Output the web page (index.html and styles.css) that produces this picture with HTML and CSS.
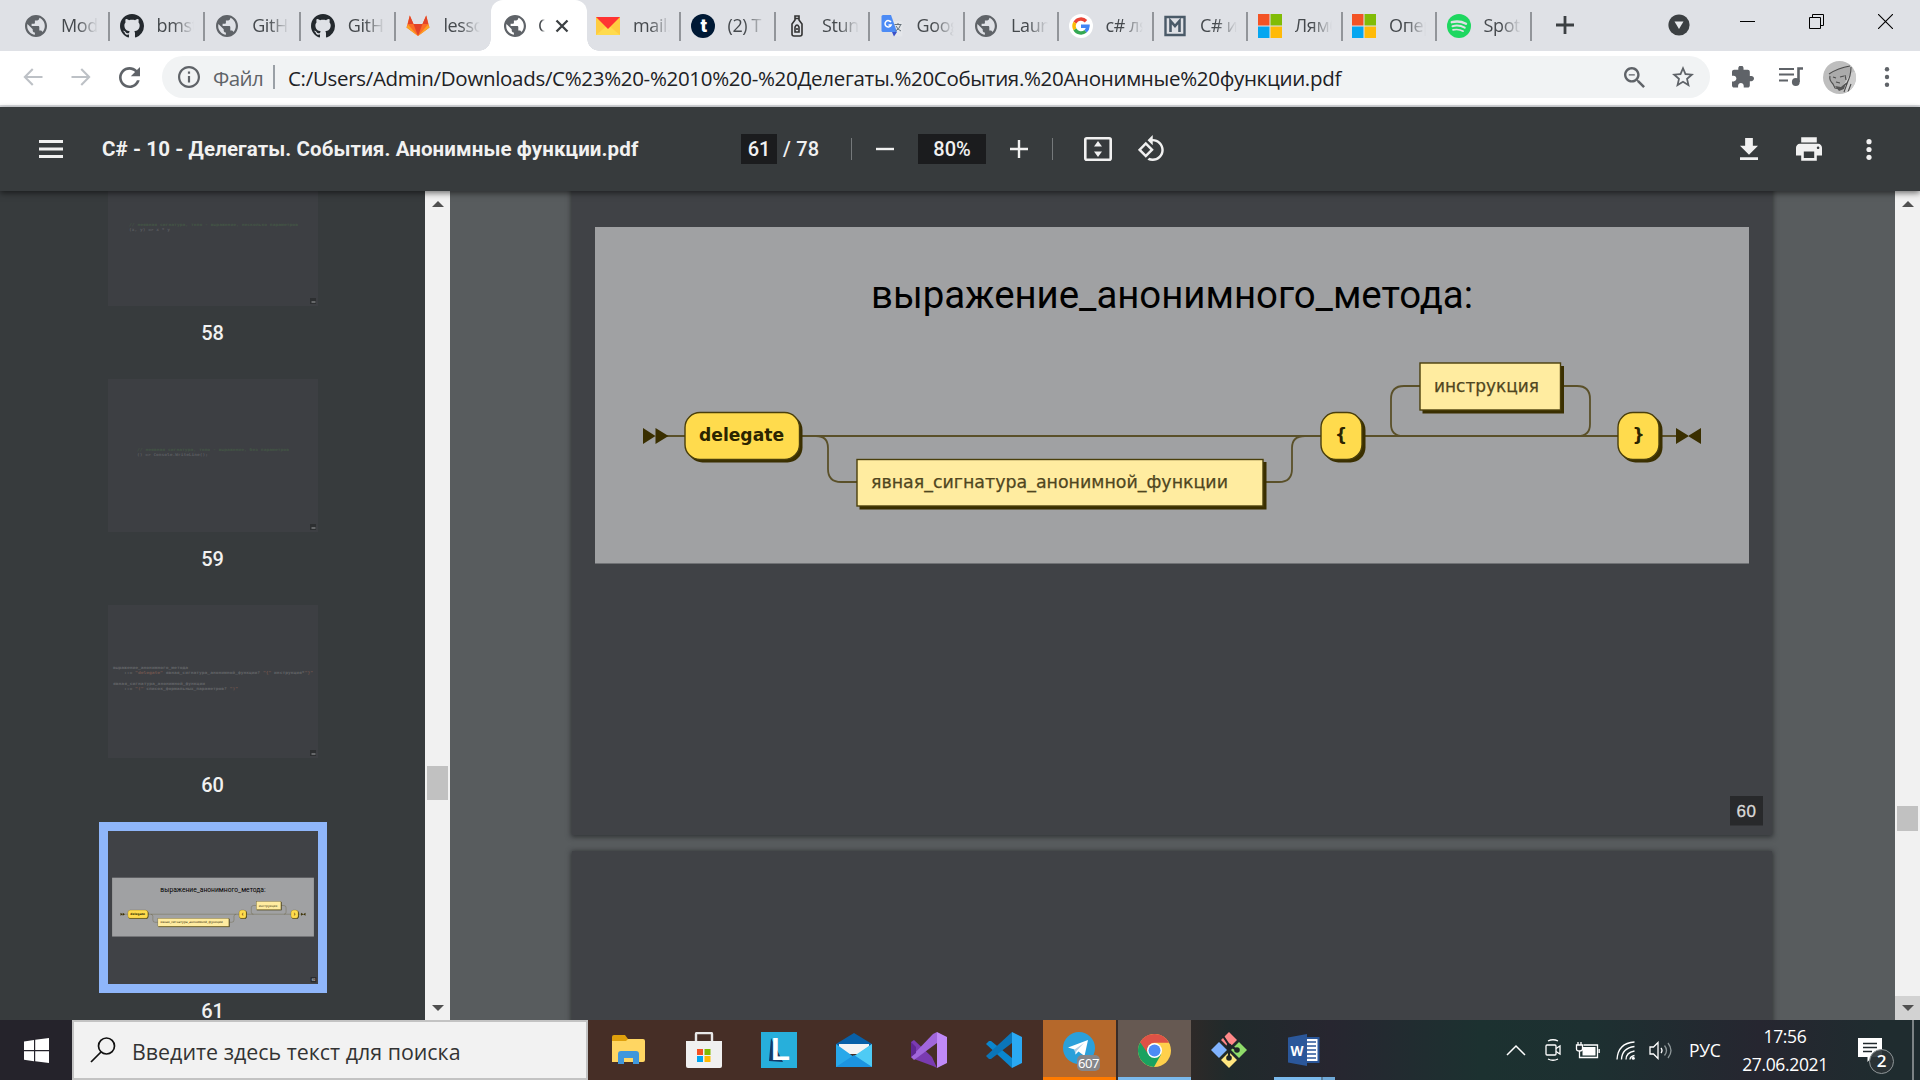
FILE: index.html
```html
<!DOCTYPE html>
<html lang="ru">
<head>
<meta charset="utf-8">
<title>C# - 10 - Делегаты. События. Анонимные функции.pdf</title>
<link rel="stylesheet" href="styles.css">
</head>
<body>
<svg class="defs" width="0" height="0">
  <defs>
    <symbol id="globe" viewBox="2 2 20 20"><path d="M12 2C6.48 2 2 6.48 2 12s4.480 10 10 10 10-4.480 10-10S17.520 2 12 2zm-1 17.930c-3.950-.49-7-3.850-7-7.930 0-.62.08-1.210.21-1.790L9 15v1c0 1.100.9 2 2 2v1.930zm6.900-2.540c-.26-.81-1-1.390-1.900-1.390h-1v-3c0-.55-.45-1-1-1H8v-2h2c.55 0 1-.45 1-1V7h2c1.100 0 2-.9 2-2v-.41c2.930 1.190 5 4.060 5 7.410 0 2.080-.8 3.970-2.100 5.390z" fill="#5f6368"/></symbol>
    <symbol id="github" viewBox="0 0 16 16"><path d="M8 0C3.58 0 0 3.58 0 8c0 3.54 2.29 6.53 5.47 7.59.4.07.55-.17.55-.38 0-.19-.01-.82-.01-1.49-2.01.37-2.53-.49-2.69-.94-.09-.23-.48-.94-.82-1.13-.28-.15-.68-.52-.01-.53.63-.01 1.08.58 1.23.82.72 1.21 1.87.87 2.33.66.07-.52.28-.87.51-1.07-1.78-.2-3.64-.89-3.64-3.95 0-.87.31-1.59.82-2.15-.08-.2-.36-1.02.08-2.12 0 0 .67-.21 2.2.82.64-.18 1.32-.27 2-.27.68 0 1.36.09 2 .27 1.53-1.04 2.2-.82 2.2-.82.44 1.1.16 1.92.08 2.12.51.56.82 1.27.82 2.15 0 3.07-1.87 3.75-3.65 3.95.29.25.54.73.54 1.48 0 1.07-.01 1.93-.01 2.2 0 .21.15.46.55.38A8.013 8.013 0 0016 8c0-4.42-3.58-8-8-8z" fill="#24292e"/></symbol>
    <symbol id="microsoft" viewBox="0 0 23 23"><path fill="#f35325" d="M0 0h11v11H0z"/><path fill="#81bc06" d="M12 0h11v11H12z"/><path fill="#05a6f0" d="M0 12h11v11H0z"/><path fill="#ffba08" d="M12 12h11v11H12z"/></symbol>
    <symbol id="slide" viewBox="572 -40 1200 875">
      <rect x="572" y="-40" width="1200" height="875" fill="#404246"/>
      <rect x="595" y="227" width="1154" height="336.500" fill="#a0a1a3"/>
      <text x="871" y="308" font-family="Roboto, sans-serif" font-size="38.400" textLength="602" fill="#000">выражение_анонимного_метода:</text>
      <g fill="none" stroke="#5a5029" stroke-width="1.800">
        <path d="M660 436H1680M816 436q12 0 12 12v21q0 13 13 13H857M1266 482H1279q13 0 13-13V448q0-12 13-12M1403 436q-12 0-12-12V399q0-13 13-13H1420M1563 386h14q13 0 13 13v25q0 12-12 12"/>
      </g>
      <g fill="#3a2f00">
        <path d="M643 428l12.500 8-12.500 8zM655.500 428l13 8-13 8zM1676 428l13 8-13 8zM1701 428l-13 8 13 8z"/>
        <rect x="687.500" y="415" width="115" height="47.500" rx="15"/>
        <rect x="859.500" y="462" width="407" height="47.500"/>
        <rect x="1323.500" y="415" width="42" height="47.500" rx="15"/>
        <rect x="1422.500" y="366" width="141.500" height="47.500"/>
        <rect x="1620.500" y="415" width="42" height="47.500" rx="15"/>
      </g>
      <g fill="#ffdb4d" stroke="#4a3f0b" stroke-width="1.400">
        <rect x="685" y="412.500" width="114.500" height="47" rx="15"/>
        <rect x="1321" y="412.500" width="41" height="47" rx="15"/>
        <rect x="1618" y="412.500" width="41" height="47" rx="15"/>
      </g>
      <g fill="#ffeca0" stroke="#4a3f0b" stroke-width="1.400">
        <rect x="857" y="459.500" width="406" height="46.500"/>
        <rect x="1420" y="363" width="140.500" height="47"/>
      </g>
      <g font-family="'DejaVu Sans', sans-serif" font-size="17" font-weight="700" fill="#2b2400">
        <text x="699" y="441" textLength="85" lengthAdjust="spacingAndGlyphs">delegate</text>
        <text x="1341" y="441" text-anchor="middle">{</text>
        <text x="1638.500" y="441" text-anchor="middle">}</text>
      </g>
      <g font-family="'DejaVu Sans', sans-serif" font-size="17" fill="#4f4620" stroke="#4f4620" stroke-width=".25">
        <text x="871" y="488" textLength="357" lengthAdjust="spacingAndGlyphs">явная_сигнатура_анонимной_функции</text>
        <text x="1434" y="392" textLength="105" lengthAdjust="spacingAndGlyphs">инструкция</text>
      </g>
      <rect x="1730" y="796" width="33" height="29.500" fill="#28292b"/>
      <text x="1736.500" y="816.500" font-family="'Liberation Sans', sans-serif" font-size="17" fill="#d8d8d8" stroke="#d8d8d8" stroke-width=".3" textLength="19.500">60</text>
    </symbol>
  </defs>
</svg>

<header class="tabs">
  <div class="tab"><svg class="fav"><use href="#globe"/></svg><span>Mod</span></div>
  <div class="tab"><svg class="fav big"><use href="#github"/></svg><span>bmst</span></div>
  <div class="tab"><svg class="fav"><use href="#globe"/></svg><span>GitH</span></div>
  <div class="tab"><svg class="fav big"><use href="#github"/></svg><span>GitH</span></div>
  <div class="tab last"><svg class="fav big" viewBox="0 0 24 24"><path d="M12 22L.5 13.500 3.800 1.500 7.500 10h9L20.200 1.500 23.500 13.500z" fill="#fc6d26"/><path d="M12 22L7.500 10h9z" fill="#e24329"/><path d="M.5 13.500L12 22 2 10.500zM23.500 13.500L12 22 22 10.500z" fill="#fca326"/><path d="M3.800 1.500L7.500 10H1.800zM20.200 1.500L16.500 10h5.700z" fill="#e24329"/></svg><span>lesso</span></div>
  <div class="tab active"><svg class="fav"><use href="#globe"/></svg><span>C</span><svg class="close" viewBox="0 0 14 14"><path d="M1.500 1.500l11 11M12.500 1.500l-11 11" stroke="#3c4043" stroke-width="2.300"/></svg></div>
  <div class="tab narrow"><svg class="fav big" viewBox="0 0 24 24"><path d="M0 3h24v18H0z" fill="#ffcc40"/><path d="M0 21L12 11 24 21z" fill="#ffdb4d"/><path d="M0 3h24L12 15z" fill="#f33"/></svg><span>mail.</span></div>
  <div class="tab narrow"><svg class="fav big" viewBox="0 0 24 24"><circle cx="12" cy="12" r="12" fill="#001935"/><text x="12.500" y="18" text-anchor="middle" font-family="Roboto, sans-serif" font-size="19" font-weight="900" fill="#fff">t</text></svg><span>(2) T</span></div>
  <div class="tab narrow"><svg class="fav big" viewBox="0 0 24 24"><path d="M10 2h4v4l3 4v10q0 2-2 2H9q-2 0-2-2V10l3-4zM9.500 4.500h5" fill="none" stroke="#333" stroke-width="1.600"/><path d="M10 18v-5q2-4 4 0v5zM12 14v2" fill="none" stroke="#333" stroke-width="1.600"/></svg><span>Stun</span></div>
  <div class="tab narrow"><svg class="fav big" viewBox="0 0 24 24"><path d="M10 7h11q1.500 0 1.500 1.500V21q0 1.500-1.500 1.500h-7z" fill="#e4e6ea"/><path d="M12 18h5l-3 4.500z" fill="#3a50c8"/><path d="M3 1h8l6 17H3q-1.500 0-1.500-1.500v-14Q1.500 1 3 1z" fill="#4c8bf5"/><path d="M11 8.200A3.200 3.200 0 1 0 11.200 11H8.500" fill="none" stroke="#fff" stroke-width="1.500"/><path d="M14.500 10.500h7M18 9v2M20.500 11q-1 4-5 6M16 12q2 4 5 5" fill="none" stroke="#657079"/></svg><span>Goog</span></div>
  <div class="tab narrow"><svg class="fav"><use href="#globe"/></svg><span>Laun</span></div>
  <div class="tab narrow"><svg class="fav big" viewBox="0 0 24 24"><circle cx="12" cy="12" r="12" fill="#fff"/><g fill="none" stroke-width="3.400"><path d="M17 7.200A7 7 0 0 0 5.900 8.600" stroke="#ea4335"/><path d="M5.900 8.600a7 7 0 0 0 0 6.800" stroke="#fbbc05"/><path d="M5.900 15.400A7 7 0 0 0 16.600 17.300" stroke="#34a853"/><path d="M16.600 17.300A7 7 0 0 0 19 12.300H12" stroke="#4285f4"/></g></svg><span>c# ля</span></div>
  <div class="tab narrow"><svg class="fav big" viewBox="0 0 24 24"><path d="M2.500 3h19v18h-19z" fill="none" stroke="#4a5a68" stroke-width="2.400"/><path d="M7.500 18V7l4.500 5 4.500-5v11" fill="none" stroke="#4a5a68" stroke-width="2.600"/></svg><span>C# и</span></div>
  <div class="tab narrow"><svg class="fav big"><use href="#microsoft"/></svg><span>Лямб</span></div>
  <div class="tab narrow"><svg class="fav big"><use href="#microsoft"/></svg><span>Опер</span></div>
  <div class="tab narrow"><svg class="fav big" viewBox="0 0 24 24"><circle cx="12" cy="12" r="12" fill="#1ed760"/><g fill="none" stroke="#dfe1e6" stroke-linecap="round"><path d="M4.800 8.200q7.500-2 14.200 1.600" stroke-width="2.400"/><path d="M5.500 12.200q6.500-1.700 12.200 1.500" stroke-width="2"/><path d="M6 15.900q5.500-1.300 10.200 1.300" stroke-width="1.600"/></g></svg><span>Spoti</span></div>
  <svg class="newtab" viewBox="0 0 18 18"><path d="M9 0v18M0 9h18" stroke="#3c4043" stroke-width="2.800"/></svg>
  <div class="window-controls">
    <svg width="22" height="22" viewBox="0 0 22 22"><circle cx="11" cy="11" r="10.600" fill="#3c4043"/><path d="M6.500 7.500h9L11 15z" fill="#e8eaed"/></svg>
    <svg width="15" height="15" viewBox="0 0 15 15"><path d="M0 7.500h15" stroke="#000"/></svg>
    <svg width="15" height="15" viewBox="0 0 15 15"><path d="M.5 3.500h11v11H.5zM3.500 3.500v-3h11v11h-3" fill="none" stroke="#000"/></svg>
    <svg width="15" height="15" viewBox="0 0 15 15"><path d="M0 0l15 15M15 0L0 15" stroke="#000" stroke-width="1.100"/></svg>
  </div>
</header>

<nav class="address-bar">
  <svg class="nav-icon" viewBox="0 0 24 24" fill="#bdc1c6"><path d="M21.500 11H6.300l6.200-6.200L11 3.300 2.400 12l8.600 8.700 1.500-1.500L6.300 13h15.200z"/></svg>
  <svg class="nav-icon" viewBox="0 0 24 24" fill="#bdc1c6"><path d="M2.500 11h15.200l-6.200-6.200L13 3.300l8.600 8.700-8.600 8.700-1.500-1.500 6.200-6.200H2.500z"/></svg>
  <svg class="nav-icon reload" viewBox="4 4 16 16" fill="#5f6368"><path d="M17.650 6.350C16.200 4.900 14.210 4 12 4c-4.420 0-7.990 3.580-7.990 8s3.570 8 7.990 8c3.730 0 6.840-2.550 7.730-6h-2.080c-.82 2.330-3.040 4-5.650 4-3.310 0-6-2.690-6-6s2.690-6 6-6c1.660 0 3.140.69 4.220 1.780L13 11h7V4l-2.350 2.350z"/></svg>
  <div class="omnibox">
    <svg width="22" height="22" viewBox="2 2 20 20" fill="#5f6368"><path d="M11 17h2v-6h-2v6zm1-15C6.480 2 2 6.480 2 12s4.480 10 10 10 10-4.480 10-10S17.520 2 12 2zm0 18c-4.410 0-8-3.590-8-8s3.590-8 8-8 8 3.590 8 8-3.590 8-8 8zM11 9h2V7h-2v2z"/></svg>
    <span class="scheme">Файл</span>
    <i class="divider"></i>
    <span class="url">C:/Users/Admin/Downloads/C%23%20-%2010%20-%20Делегаты.%20События.%20Анонимные%20функции.pdf</span>
    <svg class="zoomed" width="21" height="21" viewBox="3 3 17.500 17.500" fill="#5f6368"><path d="M15.500 14h-.79l-.28-.27C15.410 12.590 16 11.110 16 9.500 16 5.910 13.090 3 9.500 3S3 5.910 3 9.500 5.910 16 9.500 16c1.610 0 3.090-.59 4.230-1.570l.27.28v.79l5 4.990L20.490 19l-4.990-5zm-6 0C7.010 14 5 11.990 5 9.500S7.010 5 9.500 5 14 7.010 14 9.500 11.990 14 9.500 14zM7 9h5v1H7z"/></svg>
    <svg width="22" height="22" viewBox="2 2 20 20" fill="#5f6368"><path d="M22 9.240l-7.190-.62L12 2 9.190 8.630 2 9.240l5.460 4.730L5.820 21 12 17.270 18.180 21l-1.630-7.030L22 9.240zM12 15.400l-3.760 2.270 1-4.280-3.320-2.880 4.380-.38L12 6.100l1.710 4.040 4.380.38-3.320 2.880 1 4.280L12 15.400z"/></svg>
  </div>
  <svg class="puzzle" width="22" height="22" viewBox="2 1.500 21 21" fill="#5f6368"><path d="M20.500 11H19V7c0-1.100-.9-2-2-2h-4V3.500C13 2.120 11.880 1 10.500 1S8 2.120 8 3.500V5H4c-1.100 0-1.990.9-1.990 2v3.800H3.500c1.490 0 2.700 1.210 2.700 2.700s-1.210 2.700-2.700 2.700H2V20c0 1.100.9 2 2 2h3.800v-1.500c0-1.490 1.210-2.700 2.700-2.700 1.490 0 2.700 1.210 2.700 2.700V22H17c1.100 0 2-.9 2-2v-4h1.500c1.380 0 2.500-1.120 2.500-2.500S21.880 11 20.500 11z"/></svg>
  <svg class="music" width="25" height="20" viewBox="0 0 25 20"><path d="M0 2h15M0 7.500h15M0 13.500h9" stroke="#5f6368" stroke-width="2.200"/><path d="M24 1.500h-4.500V15" stroke="#5f6368" stroke-width="2.600" fill="none"/><circle cx="16.800" cy="15" r="3.900" fill="#5f6368"/></svg>
  <svg class="avatar" viewBox="0 0 33 33"><defs><clipPath id="av"><circle cx="16.500" cy="16.500" r="16.500"/></clipPath></defs><g clip-path="url(#av)"><path d="M0 0h33v33H0z" fill="#bebebe"/><path d="M6 14q8-7 20-9 4 6 0 13l-4 6-8 3-5-4-3-4z" fill="#ababab"/><path d="M24 18l-5 9 6 6h8V10l-5 2z" fill="#cecece"/><path d="M6 13q9-6 21-8M7 15q-1 4 3 8l2 4 5 1 7-6q4-7 4-16M10 16l3 1M17 16l4-1M13 21l4 1M25 20l-4 11M28 23l-3 8M22 14l1 5" fill="none" stroke="#4c4c4c" stroke-width="1.100"/><path d="M12 25l6 1 5-4-2 6-5 2z" fill="#555"/></g></svg>
  <svg class="more" width="6" height="20" viewBox="0 0 6 20" fill="#5f6368"><circle cx="3" cy="2.200" r="2.200"/><circle cx="3" cy="10" r="2.200"/><circle cx="3" cy="17.800" r="2.200"/></svg>
</nav>

<div class="pdf-toolbar">
  <div class="tool-left">
    <svg width="24" height="18" viewBox="0 0 24 18"><path d="M0 1.500h24M0 9h24M0 16.500h24" stroke="#f1f1f1" stroke-width="3"/></svg>
    <span class="doc-title">C# - 10 - Делегаты. События. Анонимные функции.pdf</span>
  </div>
  <div class="tool-center">
    <span class="field page">61</span><span class="total">/ 78</span>
    <i class="sep"></i>
    <svg class="minus" width="18" height="18" viewBox="0 0 18 18"><path d="M0 9h18" stroke="#f1f1f1" stroke-width="2.400"/></svg>
    <span class="field zoom">80%</span>
    <svg class="plus" width="18" height="18" viewBox="0 0 18 18"><path d="M0 9h18M9 0v18" stroke="#f1f1f1" stroke-width="2.400"/></svg>
    <i class="sep"></i>
    <svg class="fit" width="28" height="24" viewBox="0 0 28 24"><rect x="1.300" y="1.300" width="25.400" height="21.400" rx="1.500" fill="none" stroke="#f1f1f1" stroke-width="2.600"/><path d="M14 4l4 5.500h-8zM14 20l4-5.500h-8z" fill="#f1f1f1"/></svg>
    <svg class="rotate" width="27" height="27" viewBox="1 0 22 22" fill="#f1f1f1"><path d="M7.340 6.410L.86 12.900l6.490 6.480 6.490-6.480-6.500-6.490zM3.690 12.900l3.660-3.660L11 12.900l-3.660 3.660-3.650-3.660zm15.670-6.260C17.610 4.880 15.300 4 13 4V.76L8.760 5 13 9.240V6c1.790 0 3.580.68 4.950 2.050 2.730 2.730 2.730 7.170 0 9.900C16.580 19.320 14.790 20 13 20c-.97 0-1.940-.21-2.840-.61l-1.490 1.490C10.020 21.620 11.510 22 13 22c2.300 0 4.610-.88 6.360-2.640 3.520-3.510 3.520-9.210 0-12.720z"/></svg>
  </div>
  <div class="tool-right">
    <svg width="18" height="22" viewBox="5 3 14 17" fill="#f1f1f1"><path d="M19 9h-4V3H9v6H5l7 7 7-7zM5 18v2h14v-2H5z"/></svg>
    <svg width="26" height="24" viewBox="2 3 20 18" fill="#f1f1f1"><path d="M19 8H5c-1.660 0-3 1.340-3 3v6h4v4h12v-4h4v-6c0-1.660-1.340-3-3-3zm-3 11H8v-5h8v5zm3-7c-.55 0-1-.45-1-1s.45-1 1-1 1 .45 1 1-.45 1-1 1zm-1-9H6v4h12V3z"/></svg>
    <svg width="6" height="21" viewBox="0 0 6 21" fill="#f1f1f1"><circle cx="3" cy="2.700" r="2.600"/><circle cx="3" cy="10.500" r="2.600"/><circle cx="3" cy="18.300" r="2.600"/></svg>
  </div>
</div>

<main class="viewer">
  <aside class="thumbs">
    <figure>
      <svg class="thumb" viewBox="0 0 210 153"><g font-family="'DejaVu Sans Mono', monospace" font-size="4" font-weight="700"><text x="21" y="72.500" textLength="169" lengthAdjust="spacingAndGlyphs" fill="#435545">//  неявная сигнатура, тело - выражение, несколько параметров</text><text x="21" y="77.500" textLength="41" lengthAdjust="spacingAndGlyphs" fill="#5a5c60">(x, y) =&gt; x * y</text></g><path d="M202 145h6v6h-6z" fill="#2d2f31"/><path d="M203.500 148h4v2h-4z" fill="#66686a"/></svg>
      <figcaption>58</figcaption>
    </figure>
    <figure>
      <svg class="thumb" viewBox="0 0 210 153"><g font-family="'DejaVu Sans Mono', monospace" font-size="4" font-weight="700"><text x="29" y="71.500" textLength="152" lengthAdjust="spacingAndGlyphs" fill="#435545">//  неявная сигнатура, тело - выражение, без параметров</text><text x="29" y="76.500" textLength="71" lengthAdjust="spacingAndGlyphs" fill="#5a5c60">() =&gt; Console.WriteLine();</text></g><path d="M202 145h6v6h-6z" fill="#2d2f31"/><path d="M203.500 148h4v2h-4z" fill="#66686a"/></svg>
      <figcaption>59</figcaption>
    </figure>
    <figure>
      <svg class="thumb" viewBox="0 0 210 153"><g font-family="'DejaVu Sans Mono', monospace" font-size="4" font-weight="700" fill="#626467"><text x="5" y="63.500" textLength="75" lengthAdjust="spacingAndGlyphs">выражение_анонимного_метода</text><text x="16" y="69" textLength="189" lengthAdjust="spacingAndGlyphs">::= <tspan fill="#70564f">"delegate"</tspan> явная_сигнатура_анонимной_функции? <tspan fill="#70564f">"{"</tspan> инструкция*<tspan fill="#70564f">"}"</tspan></text><text x="5" y="79.500" textLength="92" lengthAdjust="spacingAndGlyphs">явная_сигнатура_анонимной_функции</text><text x="16" y="85" textLength="114" lengthAdjust="spacingAndGlyphs">::= <tspan fill="#70564f">"("</tspan> список_формальных_параметров? <tspan fill="#70564f">")"</tspan></text></g><path d="M202 145h6v6h-6z" fill="#2d2f31"/><path d="M203.500 148h4v2h-4z" fill="#66686a"/></svg>
      <figcaption>60</figcaption>
    </figure>
    <figure>
      <svg class="thumb current"><use href="#slide"/></svg>
      <figcaption>61</figcaption>
    </figure>
  </aside>
  <div class="scrollbar side"><b class="up"></b><i></i><b class="down"></b></div>
  <section class="pages">
    <svg class="sheet"><use href="#slide"/></svg>
    <div class="sheet"></div>
  </section>
  <div class="scrollbar main"><b class="up"></b><i></i><b class="down held"></b></div>
</main>

<footer class="taskbar">
  <div class="start"><svg width="25" height="25" viewBox="0 0 25 25" fill="#fff"><path d="M0 3.500L10 2v10H0zM11.200 1.800L25 0v12H11.200zM0 13.200h10v10L0 21.700zM11.200 13.200H25v11.800l-13.800-1.800z"/></svg></div>
  <div class="search"><svg width="26" height="26" viewBox="0 0 26 26"><circle cx="16.500" cy="9" r="8" fill="none" stroke="#111" stroke-width="1.700"/><path d="M11 15L1 25" stroke="#111" stroke-width="1.700"/></svg><span>Введите здесь текст для поиска</span></div>
  <div class="apps">
    <div class="app"><svg width="33" height="30" viewBox="0 0 33 30"><path d="M0 2q0-2 2-2h11l3 4v5H0z" fill="#dfa00c"/><path d="M0 6h14l2-2h15q2 0 2 2v19q0 2-2 2H0z" fill="#ffd662"/><path d="M6 29V19q0-3 3-3h15q3 0 3 3v10h-6v-6h-9v6z" fill="#3f97dc"/></svg></div>
    <div class="app"><svg width="36" height="36" viewBox="0 0 36 36"><path d="M10 10V2q0-1 1-1h14q1 0 1 1v8" fill="none" stroke="#e8e8e8" stroke-width="2.400"/><path d="M0 9h36v25q0 2-2 2H2q-2 0-2-2z" fill="#f0f0f0"/><path d="M11 17h6v6h-6z" fill="#f25022"/><path d="M18.500 17h6v6h-6z" fill="#7fba00"/><path d="M11 24h6v6h-6z" fill="#00a4ef"/><path d="M18.500 24h6v6h-6z" fill="#ffb900"/></svg></div>
    <div class="app"><svg width="36" height="36" viewBox="0 0 36 36"><path d="M0 0h36v36H0z" fill="#27afdb"/><path d="M10 6l-2 23 14 1" fill="#123a69"/><text x="10" y="28" font-family="'Liberation Sans', sans-serif" font-weight="700" font-size="31" fill="#fff">L</text></svg></div>
    <div class="app"><svg width="36" height="34" viewBox="0 0 36 34"><path d="M0 11L18 0l18 11v5H0z" fill="#0860a8"/><path d="M3 11h30v10H3z" fill="#f4f4f4"/><path d="M0 11l18 13L36 11v23H0z" fill="#28a8ea"/><path d="M18 23l18-12v23z" fill="#4ecbf5"/><path d="M0 34l18-12 18 12z" fill="#1c94e0"/></svg></div>
    <div class="app"><svg width="36" height="36" viewBox="0 0 36 36"><path d="M0 10l3-2 18 17 5 11-4-2L3 27l-3-2z" fill="#7a3bb0"/><path d="M0 25L22 2l4-2v11L3 28z" fill="#a167dc"/><path d="M26 0l10 5v26l-10 5z" fill="#c08af7"/><path d="M0 10l5 5v6l-5 4z" fill="#5f2793"/></svg></div>
    <div class="app"><svg width="36" height="36" viewBox="0 0 36 36"><path d="M0 12l3-3h2l21 17v10z" fill="#0a86ce"/><path d="M0 24l3 3h2l21-16V0z" fill="#0b75b8"/><path d="M26 0l10 5v26l-10 5z" fill="#2aa9f3"/></svg></div>
    <div class="app telegram"><svg width="36" height="38" viewBox="0 0 36 38"><circle cx="16" cy="16" r="16" fill="#2ba0da"/><path d="M5 15.500L25 8l-3.500 16-6-4.500-3 3-1-5z" fill="#fff"/><path d="M11.500 17.500L21 11l-7.500 8-1 3.500z" fill="#b5cfe4"/></svg><span class="count">607</span></div>
    <div class="app chrome"><svg width="33" height="33" viewBox="0 0 33 33"><circle cx="16.500" cy="16.500" r="16.500" fill="#ffd04b"/><path d="M2.200 8.200A16.500 16.500 0 0 0 16 33l7-12.500-6.500-4z" fill="#1aa260"/><path d="M2.200 8.200a16.500 16.500 0 0 1 28.800.6H16.500a7.700 7.700 0 0 0-7.200 10z" fill="#de5246"/><circle cx="16.500" cy="16.500" r="7.500" fill="#fff"/><circle cx="16.500" cy="16.500" r="6" fill="#4c8bf5"/></svg></div>
    <div class="app"><svg width="36" height="36" viewBox="0 0 36 36"><path d="M18 0l8 8-8 8-8-8z" fill="#f88"/><path d="M28 10l8 8-8 8-8-8z" fill="#8fdc6a"/><path d="M8 10l8 8-8 8-8-8z" fill="#80b3ff"/><path d="M18 20l8 8-8 8-8-8z" fill="#ffe680"/><path d="M12 4l6 9v14M18 13l8 5" stroke="#1f2528" stroke-width="2.200" fill="none"/><circle cx="18" cy="14" r="2.600" fill="#1f2528"/><circle cx="26" cy="18" r="2.800" fill="#1f2528"/><circle cx="18" cy="26" r="2.800" fill="#1f2528"/></svg></div>
    <div class="app word"><svg width="32" height="32" viewBox="0 0 32 32"><path d="M16 3h15.500v26H16z" fill="#2b579a"/><path d="M18 5h11.500v22H18z" fill="#fff"/><path d="M19 8h9M19 12h9M19 16h9M19 20h9M19 24h9" stroke="#2b579a" stroke-width="1.500"/><path d="M0 3.500L19 0v32L0 28.500z" fill="#2b579a"/><text x="9" y="21.500" text-anchor="middle" font-family="'Open Sans', sans-serif" font-weight="700" font-size="14" textLength="13" lengthAdjust="spacingAndGlyphs" fill="#fff">W</text></svg></div>
  </div>
  <div class="tray">
    <svg width="20" height="12" viewBox="0 0 20 12"><path d="M1 11l9-9 9 9" fill="none" stroke="#fff" stroke-width="1.500"/></svg>
    <svg class="cam" width="17" height="22" viewBox="0 0 17 22" fill="none" stroke="#fff" stroke-width="1.300"><rect x="1" y="6" width="10" height="10" rx="1"/><path d="M11 9.500l4-2.500v8l-4-2.500M3 2q5-2.500 10 0M3 20q5 2.500 10 0"/></svg>
    <svg class="bat" width="25" height="18" viewBox="0 0 25 18"><path d="M7.500 6h13v8.500h-13z" fill="#fff"/><path d="M8.500 4h14v12.500H4.500V9M24.200 8v4" stroke="#fff" stroke-width="1.300" fill="none"/><path d="M1.500 4h6v4q0 2-3 2t-3-2zM3 4V1M6 4V1" stroke="#fff" stroke-width="1.300" fill="#232e32"/></svg>
    <svg class="wifi" width="19" height="19" viewBox="0 0 19 19" fill="none" stroke="#fff" stroke-width="1.300"><path d="M1 18.500Q2 2 18.500 1M5.500 18.500Q6 7 18.500 5.500M10 18.500q0-7 8.500-8.500M14 18.500q0-3 4.500-4"/><circle cx="17.300" cy="17.300" r="1.500" fill="#fff" stroke="none"/></svg>
    <svg class="vol" width="23" height="19" viewBox="0 0 23 19" fill="none" stroke="#fff" stroke-width="1.300"><path d="M1 6h3.500L9 1.500v16L4.500 13H1zM12 7q2 2.500 0 5"/><path d="M15.500 4.500q4 5 0 10M19 2q6 7.500 0 15" stroke="#8d9698"/></svg>
    <span class="lang">РУС</span>
    <div class="clock"><span>17:56</span><span>27.06.2021</span></div>
    <div class="notify"><svg width="24" height="25" viewBox="0 0 24 25"><path d="M0 0h24v19H14l-4.500 5v-5H0z" fill="#fff"/><path d="M5 5.500h14M5 9.500h14M5 13.500h9" stroke="#20292d" stroke-width="1.300"/></svg><span class="badge">2</span></div>
    <i class="desktop-edge"></i>
  </div>
</footer>
</body>
</html>
```
FILE: styles.css
```css
* { box-sizing: border-box; }
body { margin: 0; width: 1920px; height: 1080px; overflow: hidden; display: flex; flex-direction: column; font-family: "Open Sans", "Noto Sans", sans-serif; background: #373b3d; }
svg { display: block; flex: none; }
.defs { position: absolute; }

.tabs { height: 51px; flex: none; display: flex; padding-left: 13px; background: #dfe1e6; }
.tab { position: relative; width: 95.6px; flex: none; display: flex; align-items: center; padding-left: 11px; font-size: 18px; letter-spacing: -0.4px; color: #45494d; }
.tab.narrow { width: 94.5px; padding-left: 9.5px; }
.tab::after { content: ""; position: absolute; right: -1px; top: 12px; width: 2px; height: 29px; background: #92959a; }
.tab.narrow::after { right: 0; }
.tab.active::after, .tab.last::after { top: auto; bottom: 0; right: -12px; width: 12px; height: 12px; background: radial-gradient(circle at 100% 0, transparent 11.5px, #fff 12px); }
.tab.last::after { right: 0; background: radial-gradient(circle at 0 0, transparent 11.5px, #fff 12px); }
.tab span { flex: none; width: 37px; margin: -2px 0 0 13px; overflow: hidden; white-space: nowrap; line-height: 26px; -webkit-mask-image: linear-gradient(90deg, #000 45%, transparent); mask-image: linear-gradient(90deg, #000 45%, transparent); }
.tab .fav { width: 22px; height: 22px; margin: 0 1px; }
.tab .fav.big { width: 24px; height: 24px; margin: 0; }
.tab.active { background: #fff; border-radius: 12px 12px 0 0; padding-left: 12px; }
.tab.active span { width: 7px; margin-left: 11px; margin-right: 10px; }
.tab .close { width: 14px; height: 14px; }
.newtab { width: 18px; height: 18px; margin: 16px 0 0 24px; }
.window-controls { display: flex; flex: 1; justify-content: flex-end; padding-right: 27px; }
.window-controls svg { margin-top: 14px; margin-left: 54px; }
.window-controls svg:first-child { margin-left: 0; margin-right: -4px; }

.address-bar { height: 56px; flex: none; display: flex; align-items: center; padding: 0 0 2px 21px; background: #fff; border-bottom: 2px solid #dadce0; }
.nav-icon { width: 24px; height: 24px; margin-right: 24px; }
.nav-icon.reload { width: 21px; height: 21px; margin: 0 22px 0 2px; }
.omnibox { display: flex; align-items: center; width: 1548px; height: 42px; border-radius: 21px; background: #f1f3f4; padding-left: 16px; font-size: 20.5px; color: #202124; white-space: nowrap; }
.scheme { width: 50px; margin: 1px 0 0 13px; color: #5f6368; letter-spacing: -0.6px; }
.omnibox .divider { width: 2px; height: 24px; margin: 0 13px 0 10px; background: #9aa0a6; }
.url { flex: 1; margin-top: 1px; letter-spacing: -0.31px; }
.zoomed { margin-right: 27px; }
.omnibox svg:last-child { margin-right: 16px; }
.puzzle { margin-left: 22px; }
.music { margin-left: 25px; }
.avatar { width: 33px; height: 33px; margin-left: 19px; }
.more { margin-left: 28px; }

.pdf-toolbar { position: relative; z-index: 2; height: 84px; flex: none; display: flex; align-items: center; background: #373b3d; color: #f1f1f1; box-shadow: 0 2px 6px rgba(0, 0, 0, .55); font-family: Roboto, sans-serif; font-size: 20px; font-weight: 500; }
.tool-left { width: 741px; display: flex; align-items: center; padding-left: 39px; }
.doc-title { margin-left: 39px; font-size: 20.5px; font-weight: 700; letter-spacing: 0.1px; white-space: nowrap; }
.tool-center { display: flex; align-items: center; }
.field { display: flex; align-items: center; justify-content: center; height: 30px; background: #1b1c1e; }
.page { width: 36px; }
.total { width: 74px; padding-left: 6px; letter-spacing: 0.2px; }
.zoom { width: 68px; }
.sep { width: 1px; height: 22px; background: #75797b; }
.minus { margin: 0 24px; }
.plus { margin: 0 24px; }
.fit { margin: 0 26px 0 31px; }
.rotate { margin-bottom: 3px; }
.tool-right { flex: 1; display: flex; align-items: center; justify-content: flex-end; gap: 38px; padding-right: 48px; }
.tool-right svg:last-child { margin-left: 6px; }

.viewer { flex: none; height: 829px; display: flex; overflow: hidden; }
.thumbs { width: 425px; flex: none; overflow: hidden; display: flex; flex-direction: column; align-items: center; margin-top: -38px; height: 867px; background: #373b3d; }
.thumbs figure { flex: none; height: 226px; width: 210px; margin: 0 0 0 1px; }
.thumb { width: 210px; height: 153px; background: #3d3f43; }
.thumb.current { box-shadow: 0 0 0 9px #8fb6fa; }
figcaption { margin: 15px 1px 0 0; height: 24px; text-align: center; color: #f1f1f1; font: 500 20px/24px Roboto, sans-serif; }
.scrollbar { width: 25px; flex: none; display: flex; flex-direction: column; background: #f1f1f1; }
.scrollbar b { height: 24px; display: flex; align-items: center; justify-content: center; }
.scrollbar b::before { content: ""; border: 6px solid transparent; }
.scrollbar .up::before { border-bottom-color: #505050; border-top: 0; margin-top: 2px; }
.scrollbar .down::before { border-top-color: #505050; border-bottom: 0; }
.scrollbar .down { margin-top: auto; }
.scrollbar .held { background: #d2d2d2; }
.scrollbar i { width: 21px; margin: 551px auto 0; height: 34px; background: #c1c1c1; }
.scrollbar.main i { margin-top: 591px; height: 25px; }
.pages { width: 1445px; flex: none; background: #585c5e; overflow: hidden; display: flex; flex-direction: column; align-items: flex-start; gap: 16px; padding-left: 121.5px; }
.sheet { width: 1200px; height: 875px; flex: none; background: #404246; box-shadow: 0 1px 5px 1px rgba(35, 38, 40, .75); }
.pages .sheet:first-child { margin-top: -231px; }

.taskbar { position: relative; height: 60px; flex: none; display: flex; background: linear-gradient(90deg, #25232b 0, #25232b 72px, #462e26 590px, #462e26 1040px, #2d2928 1192px, #202a2b 1230px, #272630 1330px, #1c3130 1480px, #1d3031 1590px, #262630 1760px, #1f2c2f 1880px); color: #fff; }
.start { width: 72px; display: flex; align-items: center; padding-left: 24px; }
.search { width: 516px; display: flex; align-items: center; background: #f2f2f2; border: 2px solid #c3c3c3; color: #333; font-size: 21.400px; padding-left: 16px; }
.search span { margin: 2px 0 0 16px; white-space: nowrap; }
.apps { display: flex; padding-left: 3px; }
.app { width: 75px; display: flex; align-items: center; justify-content: center; position: relative; }
.app.telegram { width: 73px; margin-left: 2px; background: #b5682b; border-bottom: 3px solid #ff7b00; }
.telegram svg { margin: 4px 0 0 2px; }
.count { position: absolute; left: 34px; top: 35px; width: 23px; height: 16px; border-radius: 5px; background: #85868a; font: 13px/16px "Noto Sans", sans-serif; letter-spacing: -0.4px; text-align: center; color: #fff; }
.app.chrome { width: 73px; margin-left: 2px; background: #665952; border-bottom: 3px solid #7ab9ec; padding-top: 3px; }
.app.word::after { content: ""; position: absolute; left: 8px; bottom: 0; width: 61px; height: 3px; background: linear-gradient(90deg, #7ab9ec 47px, #5a7f9d 47px, #5a7f9d 49px, #6fa9d8 49px); }
.tray { flex: 1; display: flex; align-items: center; justify-content: flex-end; font-size: 17.500px; letter-spacing: -0.35px; }
.cam { margin-left: 19px; }
.bat { margin-left: 13px; }
.wifi { margin-left: 16px; }
.vol { margin-left: 14px; }
.lang { width: 33px; margin-left: 17px; }
.clock { display: flex; flex-direction: column; width: 90px; margin-left: 18px; align-items: center; line-height: 27.500px; padding-top: 1px; }
.notify { position: relative; margin-left: 28px; }
.badge { position: absolute; left: 11px; top: 11px; width: 25px; height: 25px; border-radius: 50%; border: 1px solid #8f9698; background: rgba(43, 51, 54, .92); font: 600 17px/22px "Open Sans", sans-serif; text-align: center; }
.desktop-edge { width: 2px; height: 60px; margin: 0 6px 0 30px; background: #7c8385; }
```
